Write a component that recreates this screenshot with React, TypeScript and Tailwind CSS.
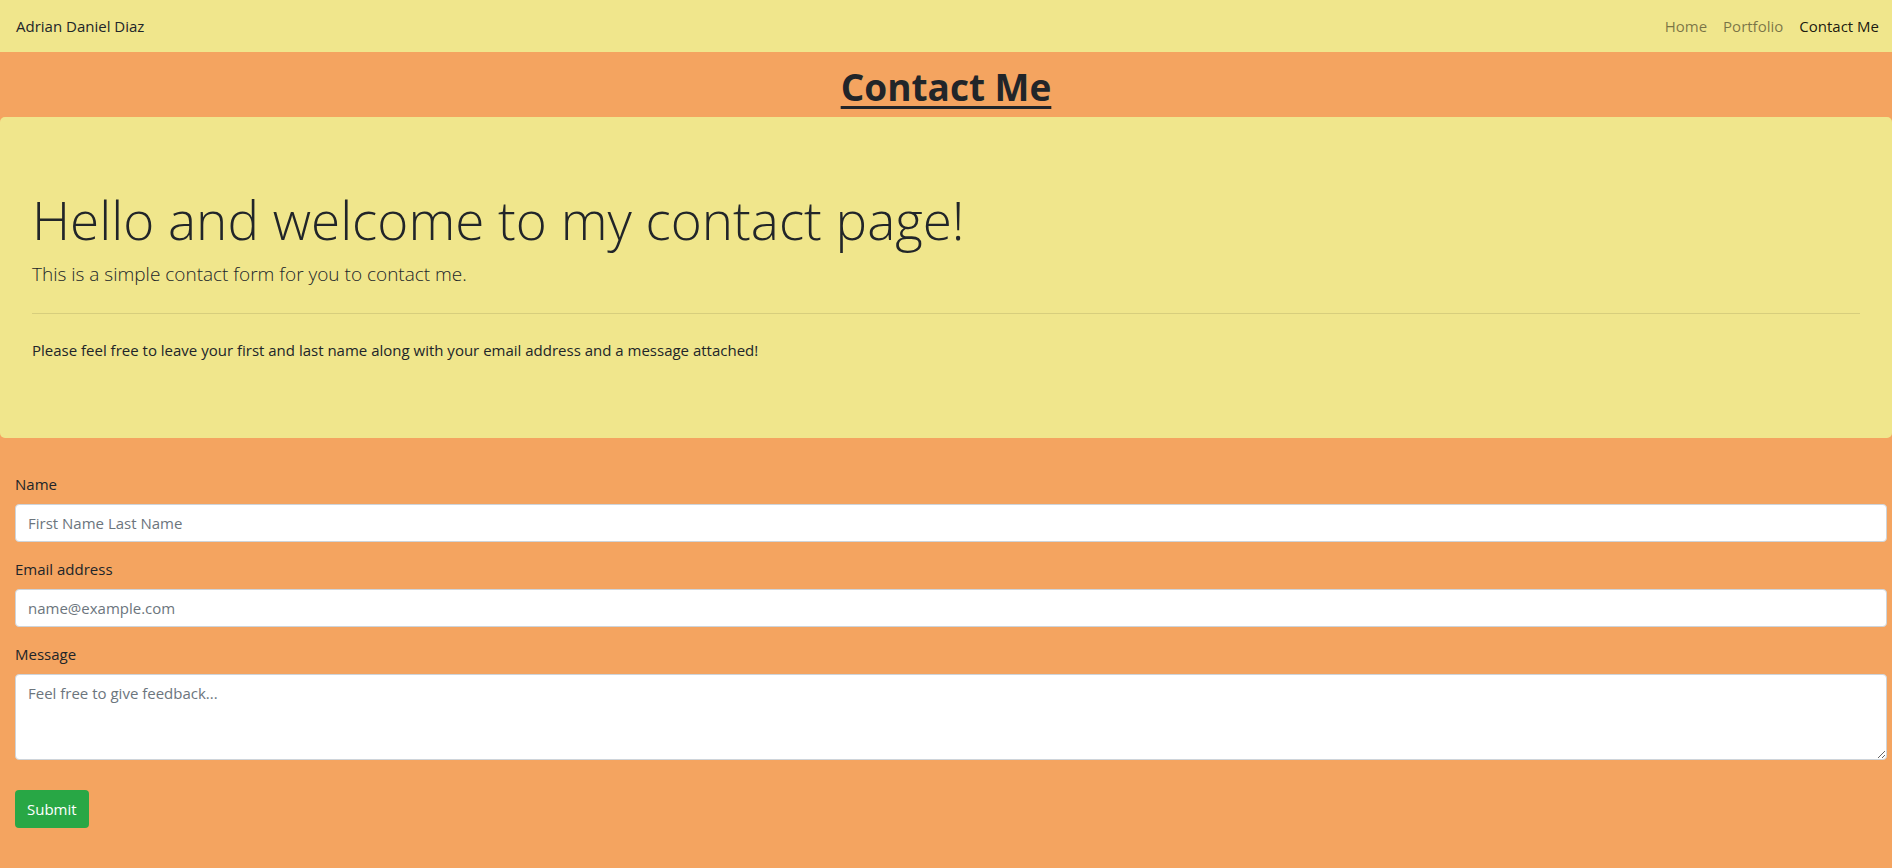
export default function App() {
  return (
    <div
      className="min-h-[868px] bg-[#f4a460] text-[#212529] text-base"
      style={{ fontFamily: '"Open Sans", "Noto Sans", sans-serif' }}
    >
      {/* Navbar */}
      <nav className="flex h-[52px] items-center justify-between bg-[#f0e68c] pl-4 pr-[5px]">
        <span className="text-[15px] leading-6">Adrian Daniel Diaz</span>
        <div className="flex text-[15px] leading-6">
          <a className="px-2 text-black/50">Home</a>
          <a className="px-2 text-black/50">Portfolio</a>
          <a className="px-2 text-black/90">Contact Me</a>
        </div>
      </nav>

      {/* Page title */}
      <h1 className="pt-[11px] pb-[6px] text-center text-[37px] font-bold leading-[48px] underline decoration-[3px] underline-offset-[5px]">
        Contact Me
      </h1>

      {/* Jumbotron */}
      <section className="h-[321px] rounded-[5px] bg-[#f0e68c] px-8 pt-[69px]">
        <h2 className="text-[53px] font-light leading-[67px]">
          Hello and welcome to my contact page!
        </h2>
        <p className="mt-[6px] text-[19px] font-light leading-[30px]">
          This is a simple contact form for you to contact me.
        </p>
        <hr className="my-6 border-black/10" />
        <p className="text-[15px] leading-6">
          Please feel free to leave your first and last name along with your email address and a message attached!
        </p>
      </section>

      {/* Form */}
      <form className="pl-[15px] pr-[5px] pt-[34px]">
        <div className="mb-[15px]">
          <label className="mb-2 block text-[15px] leading-6">Name</label>
          <input
            type="text"
            placeholder="First Name Last Name"
            className="block h-[38px] w-full rounded border border-[#ced4da] bg-white px-3 text-[15px] text-[#495057] placeholder-[#6c757d] outline-none"
          />
        </div>
        <div className="mb-[15px]">
          <label className="mb-2 block text-[15px] leading-6">Email address</label>
          <input
            type="email"
            placeholder="name@example.com"
            className="block h-[38px] w-full rounded border border-[#ced4da] bg-white px-3 text-[15px] text-[#495057] placeholder-[#6c757d] outline-none"
          />
        </div>
        <div className="mb-[30px]">
          <label className="mb-2 block text-[15px] leading-6">Message</label>
          <textarea
            rows={3}
            placeholder="Feel free to give feedback..."
            className="block h-[86px] w-full rounded border border-[#ced4da] bg-white px-3 py-1.5 text-[15px] leading-6 text-[#495057] placeholder-[#6c757d] outline-none"
          />
        </div>
        <button
          type="button"
          className="h-[38px] rounded bg-[#28a745] px-3 text-[15px] text-white"
        >
          Submit
        </button>
      </form>
    </div>
  );
}
